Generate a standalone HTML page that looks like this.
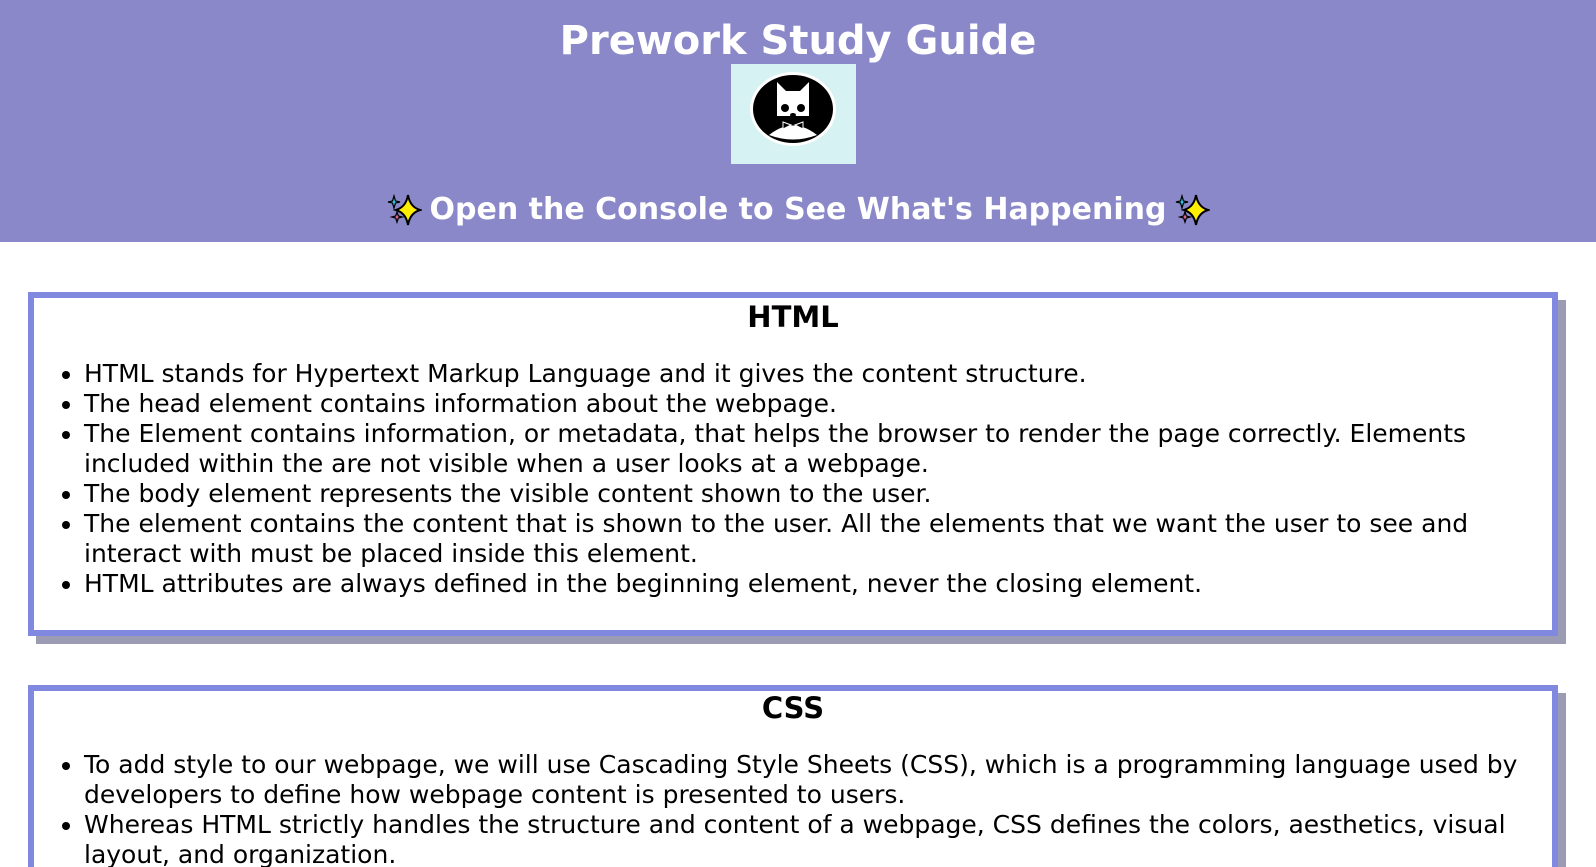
<!DOCTYPE html>
<html><head><meta charset="utf-8"><style>
*{box-sizing:border-box}
html,body{margin:0;height:867px;overflow:hidden}
body{background:#fff;font-family:Verdana,"DejaVu Sans",sans-serif;color:#000;width:1596px;position:relative}
header{background:#8a88c8;height:242px;position:relative;color:#fff;text-align:center}
h1{margin:0;position:absolute;top:16px;left:0;right:0;font-size:40px;line-height:50px;font-weight:bold}
.logo{position:absolute;left:731px;top:64px;width:125px;height:100px;background:#d6f2f2}
.sub{position:absolute;top:190px;left:0;right:0;font-size:30px;line-height:40px;font-weight:bold;display:flex;justify-content:center;align-items:center;gap:8px}
.box{position:absolute;left:28px;width:1530px;border:6px solid #8088e0;background:#fff;box-shadow:8px 8px 0 #9b9bb4}
.box h2{margin:0;text-align:center;font-size:29px;line-height:34px;position:absolute;left:0;right:0}
.box ul{position:absolute;left:0;right:0;margin:0;padding-left:50px;padding-right:8px;font-size:25px;line-height:30px}
</style></head><body>
<header>
<h1>Prework Study Guide</h1>
<div class="logo"><svg width="125" height="100" viewBox="0 0 125 100">
<ellipse cx="62" cy="45" rx="43" ry="37" fill="#fff"/>
<ellipse cx="62" cy="45" rx="40" ry="34" fill="#000"/>
<path d="M46 30 L46 18 L55 27 L69 27 L78 18 L78 30 L78 52 L46 52 Z" fill="#fff"/>
<path d="M38 71 Q62 52 86 71 Q62 80 38 71Z" fill="#fff"/>
<circle cx="54" cy="44" r="4" fill="#000"/><circle cx="70" cy="44" r="4" fill="#000"/>
<ellipse cx="62" cy="51" rx="3" ry="2" fill="#000"/>
<path d="M52 58 L60 61 L52 65Z M72 58 L64 61 L72 65Z" fill="#000" stroke="#fff" stroke-width="1"/>
</svg></div>
<div class="sub"><svg width="36" height="36" viewBox="0 0 36 36"><path d="M22 3 Q24 15 34 18 Q24 21 22 33 Q20 21 10 18 Q20 15 22 3Z" fill="#ffee00" stroke="#000" stroke-width="2"/><path d="M8 4 L9.5 9 L14 10 L9.5 11 L8 16 L6.5 11 L2 10 L6.5 9Z" fill="#33ccee" stroke="#000" stroke-width="1.3"/><path d="M11 20 L12.3 24 L16 25 L12.3 26 L11 30 L9.7 26 L6 25 L9.7 24Z" fill="#f7a" stroke="#000" stroke-width="1.3"/></svg><span>Open the Console to See What's Happening</span><svg width="36" height="36" viewBox="0 0 36 36"><path d="M22 3 Q24 15 34 18 Q24 21 22 33 Q20 21 10 18 Q20 15 22 3Z" fill="#ffee00" stroke="#000" stroke-width="2"/><path d="M8 4 L9.5 9 L14 10 L9.5 11 L8 16 L6.5 11 L2 10 L6.5 9Z" fill="#33ccee" stroke="#000" stroke-width="1.3"/><path d="M11 20 L12.3 24 L16 25 L12.3 26 L11 30 L9.7 26 L6 25 L9.7 24Z" fill="#f7a" stroke="#000" stroke-width="1.3"/></svg></div>
</header>
<div class="box" style="top:292px;height:344px">
<h2 style="top:2px">HTML</h2>
<ul style="top:61px">
<li>HTML stands for Hypertext Markup Language and it gives the content structure.</li>
<li>The head element contains information about the webpage.</li>
<li>The Element contains information, or metadata, that helps the browser to render the page correctly. Elements included within the are not visible when a user looks at a webpage.</li>
<li>The body element represents the visible content shown to the user.</li>
<li>The element contains the content that is shown to the user. All the elements that we want the user to see and interact with must be placed inside this element.</li>
<li>HTML attributes are always defined in the beginning element, never the closing element.</li>
</ul>
</div>
<div class="box" style="top:685px;height:200px">
<h2 style="top:0px">CSS</h2>
<ul style="top:59px">
<li>To add style to our webpage, we will use Cascading Style Sheets (CSS), which is a programming language used by developers to define how webpage content is presented to users.</li>
<li>Whereas HTML strictly handles the structure and content of a webpage, CSS defines the colors, aesthetics, visual layout, and organization.</li>
</ul>
</div>
</body></html>
